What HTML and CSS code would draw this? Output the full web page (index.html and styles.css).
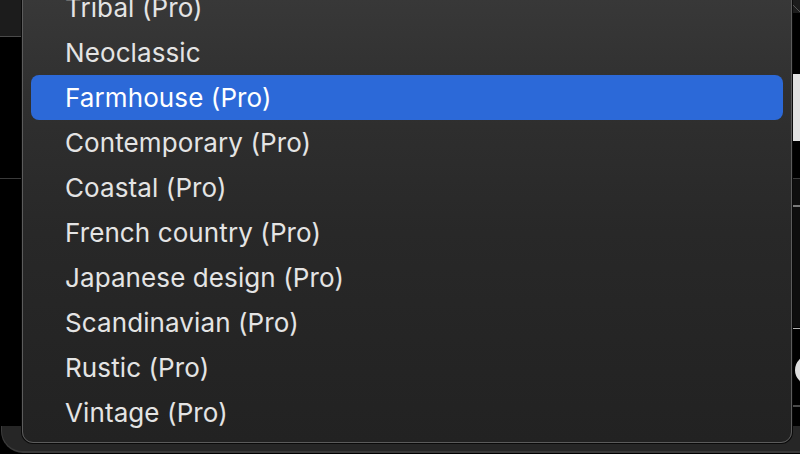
FILE: index.html
```html
<!DOCTYPE html>
<html lang="en">
<head>
<meta charset="utf-8">
<title>Style menu</title>
<link rel="stylesheet" href="styles.css">
</head>
<body>
<div class="desktop">
  <div class="bg-tl"></div>
  <div class="bg-line bg-line-l"></div>
  <div class="bg-window"></div>
  <div class="bg-r-top"><svg width="8" height="13" viewBox="0 0 8 13"><path d="M0 4 L8 12" stroke="#555" stroke-width="1" fill="none"/></svg></div>
  <div class="bg-r-light"></div>
  <div class="bg-line bg-line-r1"></div>
  <div class="bg-r-dark"></div>
  <div class="bg-line bg-line-r2"></div>
  <div class="bg-line bg-line-r3"></div>
  <div class="bg-r-circle"></div>
  <div class="bg-line bg-line-r4"></div>

  <ul class="menu">
    <li class="item">Tribal (Pro)</li>
    <li class="item">Neoclassic</li>
    <li class="item selected">Farmhouse (Pro)</li>
    <li class="item">Contemporary (Pro)</li>
    <li class="item">Coastal (Pro)</li>
    <li class="item">French country (Pro)</li>
    <li class="item">Japanese design (Pro)</li>
    <li class="item">Scandinavian (Pro)</li>
    <li class="item">Rustic (Pro)</li>
    <li class="item">Vintage (Pro)</li>
  </ul>
</div>
</body>
</html>
```

FILE: styles.css
```css
html, body {
  margin: 0;
  padding: 0;
  background: #000;
  overflow: hidden;
}
.desktop {
  position: relative;
  width: 800px;
  height: 454px;
  background: #000;
  font-family: Inter, "Noto Sans", "Liberation Sans", sans-serif;
}
.bg-tl {
  position: absolute;
  left: 0; top: 0;
  width: 22px; height: 36px;
  background: #1c1c1c;
  border-bottom: 1px solid #4a4a4a;
}
.bg-line {
  position: absolute;
  height: 1px;
}
.bg-line-l { left: 0; width: 22px; top: 178px; background: #3a3a3a; }
.bg-window {
  position: absolute;
  left: 1px; right: 0;
  top: 426px; bottom: 1px;
  background: #262626;
  border-left: 1px solid #3c3c3c;
  border-bottom: 2px solid #3a3a3a;
  border-bottom-left-radius: 22px;
}
.bg-r-top {
  position: absolute;
  left: 792px; top: 0;
  width: 8px; height: 13px;
  background: #1c1c1c;
}
.bg-r-top svg { display: block; }
.bg-r-light {
  position: absolute;
  left: 792px; top: 74px;
  width: 8px; height: 67px;
  background: #e2e2e2;
}
.bg-line-r1 { left: 792px; width: 8px; top: 178px; background: #3a3a3a; }
.bg-r-dark {
  position: absolute;
  left: 792px; top: 179px;
  width: 8px; height: 148px;
  background: #0e0e0e;
}
.bg-line-r2 { left: 792px; width: 8px; top: 205px; height: 2px; background: #7a7a7a; }
.bg-line-r3 { left: 792px; width: 8px; top: 328px; background: #b5b5b5; }
.bg-r-circle {
  position: absolute;
  left: 795px; top: 355px;
  width: 30px; height: 30px;
  border-radius: 50%;
  background: #dedede;
}
.bg-line-r4 { left: 792px; width: 8px; top: 405px; height: 2px; background: #4a4a4a; }

.menu {
  position: absolute;
  box-sizing: border-box;
  left: 22px;
  top: -25px;
  width: 770px;
  margin: 0;
  padding: 9px 8px 7px 8px;
  list-style: none;
  background: linear-gradient(180deg, #3a3a3a 0%, #303030 25%, #282828 55%, #222222 100%);
  border: 1px solid #5c5c5c;
  border-radius: 11px;
  box-shadow: 0 0 0 1px #0a0a0a;
}
.item {
  height: 45px;
  line-height: 45px;
  padding-left: 34px;
  font-size: 26px;
  letter-spacing: 0.1px;
  color: #e4e4e4;
  border-radius: 8px;
  white-space: nowrap;
}
.item.selected {
  background: #2c69d8;
  color: #fff;
}
```
